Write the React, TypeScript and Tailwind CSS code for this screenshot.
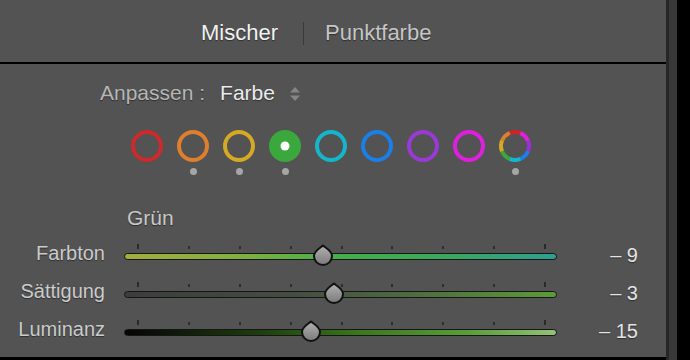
import React from "react"

type Swatch = { color: string; mark?: boolean; active?: boolean; multi?: boolean }

const swatches: Swatch[] = [
  { color: "#cc2a2c" },
  { color: "#dd7f2c", mark: true },
  { color: "#d4aa24", mark: true },
  { color: "#3aa83c", mark: true, active: true },
  { color: "#14b6cc" },
  { color: "#1a7fe6" },
  { color: "#9a3ad6" },
  { color: "#de20de" },
  { color: "", mark: true, multi: true },
]

const ringColors = ["#d0242a", "#e21ee0", "#9a30d8", "#1a7fe6", "#14b6cc", "#3aa83c", "#d4aa24", "#dd7f2c"]

function arc(cx: number, cy: number, r: number, a0: number, a1: number) {
  const rad = (a: number) => (a * Math.PI) / 180
  const x0 = cx + r * Math.cos(rad(a0))
  const y0 = cy + r * Math.sin(rad(a0))
  const x1 = cx + r * Math.cos(rad(a1))
  const y1 = cy + r * Math.sin(rad(a1))
  return `M${x0} ${y0} A${r} ${r} 0 0 1 ${x1} ${y1}`
}

function Ring({ s }: { s: Swatch }) {
  if (s.active) {
    return (
      <svg width="32" height="32" viewBox="0 0 32 32">
        <circle cx="16" cy="16" r="16" fill={s.color} />
        <circle cx="16" cy="16" r="4.5" fill="#ffffff" />
      </svg>
    )
  }
  if (s.multi) {
    return (
      <svg width="32" height="32" viewBox="0 0 32 32">
        {ringColors.map((c, i) => (
          <path key={i} d={arc(16, 16, 14, -112.5 + i * 45, -112.5 + (i + 1) * 45 + 0.5)} stroke={c} strokeWidth="4" fill="none" />
        ))}
      </svg>
    )
  }
  return (
    <svg width="32" height="32" viewBox="0 0 32 32">
      <circle cx="16" cy="16" r="14" stroke={s.color} strokeWidth="4" fill="none" />
    </svg>
  )
}

function Thumb() {
  return (
    <svg width="22" height="22" viewBox="0 0 22 22">
      <defs>
        <linearGradient id="thumbFill" x1="0" y1="0" x2="0" y2="1">
          <stop offset="0" stopColor="#b2b2b2" />
          <stop offset="1" stopColor="#7a7a7a" />
        </linearGradient>
      </defs>
      <path
        d="M11 1.5 C13 3.5 20 6.5 20 12 A9 9 0 0 1 2 12 C2 6.5 9 3.5 11 1.5 Z"
        fill="url(#thumbFill)"
        stroke="#111111"
        strokeWidth="2"
        strokeLinejoin="round"
      />
    </svg>
  )
}

interface SliderRowProps {
  label: string
  value: string
  track: string
  thumbLeft: string
}

function SliderRow({ label, value, track, thumbLeft }: SliderRowProps) {
  return (
    <div className="flex h-[38px] items-center">
      <div className="w-[105px] -mt-[7px] text-right text-[20px] leading-[24px] text-[#cbcbcb] [text-shadow:0_1px_1px_rgba(0,0,0,0.45)]">
        {label}
      </div>
      <div className="relative ml-[19px] h-[7px] w-[433px]">
        <div className="absolute bottom-[11px] left-[13px] right-[11px] flex items-end justify-between">
          {Array.from({ length: 9 }).map((_, i) => (
            <div key={i} className={i === 0 || i === 8 ? "h-[5px] w-[2px] bg-[#2a2a2a]" : "h-[3px] w-[2px] bg-[#2e2e2e]"} />
          ))}
        </div>
        <div className={`h-full w-full rounded-full border-[1.5px] border-[#161616] ${track}`} />
        <div className={`absolute top-[-9px] ${thumbLeft}`}>
          <Thumb />
        </div>
      </div>
      <div className="w-[81px] -mt-[2px] text-right text-[20px] leading-[24px] text-[#e4e4e4] [text-shadow:0_1px_1px_rgba(0,0,0,0.45)]">
        {value}
      </div>
    </div>
  )
}

export default function App() {
  return (
    <div className="flex h-[360px] w-[690px] overflow-hidden bg-black font-['Liberation_Sans',Arial,sans-serif]">
      <div className="flex h-[357px] w-[666px] flex-col bg-[#535353]">
        {/* Tabs */}
        <div className="flex h-[62px] items-center pl-[201px] pt-[4px] text-[22px] leading-[26px] [text-shadow:0_1px_1px_rgba(0,0,0,0.45)]">
          <span className="text-[#f2f2f2]">Mischer</span>
          <div className="ml-[25px] h-[23px] w-px bg-[#3a3a3a]" />
          <span className="ml-[21px] text-[#c6c6c6]">Punktfarbe</span>
        </div>
        <div className="h-[2px] bg-black" />

        {/* Adjust selector */}
        <div className="mt-[17px] flex h-[24px] items-center pl-[100px] text-[21px] leading-[24px] [text-shadow:0_1px_1px_rgba(0,0,0,0.45)]">
          <span className="text-[#b6b6b6]">Anpassen :</span>
          <span className="ml-[15px] text-[#ececec]">Farbe</span>
          <svg className="ml-[14px] mt-[2px]" width="12" height="16" viewBox="0 0 12 16">
            <path d="M6 1 L11 6.5 H1 Z" fill="#858585" />
            <path d="M6 15 L11 9.5 H1 Z" fill="#858585" />
          </svg>
        </div>

        {/* Colour swatches */}
        <div className="mt-[25px] flex pl-[124px]">
          {swatches.map((s, i) => (
            <div key={i} className="flex w-[46px] flex-col items-center">
              <Ring s={s} />
              <div className={`mt-[6px] h-[7px] w-[7px] rounded-full ${s.mark ? "bg-[#a6a6a6]" : "bg-transparent"}`} />
            </div>
          ))}
        </div>

        <div className="mt-[31px] h-[24px] pl-[127px] text-[21px] leading-[24px] text-[#c8c8c8] [text-shadow:0_1px_1px_rgba(0,0,0,0.45)]">
          Grün
        </div>

        <div className="mt-[7px] flex flex-col">
          <SliderRow
            label="Farbton"
            value="– 9"
            track="bg-[linear-gradient(to_right,#a3ad3c_0%,#84b040_25%,#44ae4a_50%,#3aa85e_75%,#2f9e92_100%)]"
            thumbLeft="left-[188px]"
          />
          <SliderRow
            label="Sättigung"
            value="– 3"
            track="bg-[linear-gradient(to_right,#3b3d3b_0%,#454e43_40%,#4f7040_70%,#5c9c38_100%)]"
            thumbLeft="left-[199px]"
          />
          <SliderRow
            label="Luminanz"
            value="– 15"
            track="bg-[linear-gradient(to_right,#050505_0%,#1c3a0e_30%,#3a7a1c_55%,#5a9e3a_80%,#94c276_100%)]"
            thumbLeft="left-[176px]"
          />
        </div>
      </div>
      <div className="h-full w-[3px] bg-[#262626]" />
      <div className="h-full w-[8px] bg-[#383838]" />
    </div>
  )
}
